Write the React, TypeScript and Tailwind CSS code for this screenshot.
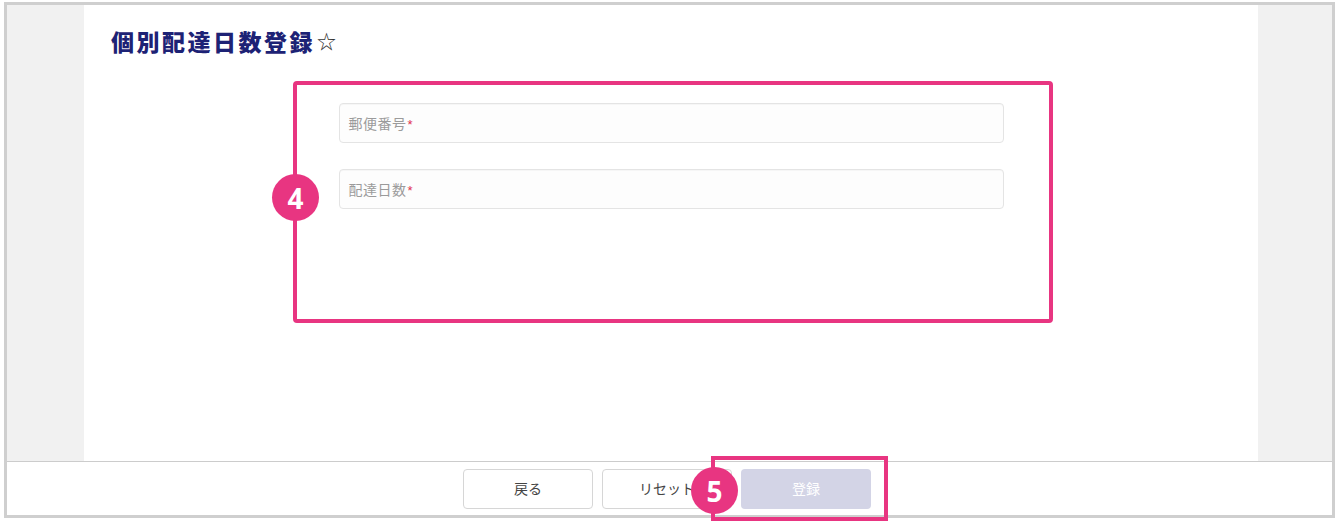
import React from "react";

const font = { fontFamily: '"Noto Sans CJK JP", "Noto Sans", sans-serif' };

function Field({ label }: { label: string }) {
  return (
    <div className="w-[665px] h-[40px] rounded-[4px] border border-[#e4e4e4] bg-[#fdfdfd] shadow-[inset_0_1px_1px_rgba(0,0,0,0.03)] flex items-center pl-[9px]">
      <span className="text-[14px] text-[#9b9b9b] tracking-[0.5px]">{label}</span>
      <span className="text-[13px] text-[#e0304e] ml-[1px] mt-[3px]" style={{ fontFamily: '"Liberation Sans", sans-serif' }}>*</span>
    </div>
  );
}

function Btn({ children, primary }: { children: React.ReactNode; primary?: boolean }) {
  return (
    <div
      className={
        primary
          ? "w-[130px] h-[40px] rounded-[4px] bg-[#d3d4e6] flex items-center justify-center text-[14px] text-white"
          : "w-[130px] h-[40px] rounded-[4px] border border-[#d6d6d6] bg-white flex items-center justify-center text-[14px] text-[#444]"
      }
    >
      {children}
    </div>
  );
}

function Badge({ n }: { n: string }) {
  return (
    <div className="w-[47px] h-[47px] rounded-full bg-[#e83581] flex items-center justify-center text-white text-[28px] font-bold leading-none" style={{ fontFamily: '"Open Sans", "Noto Sans", sans-serif' }}>
      {n}
    </div>
  );
}

export default function App() {
  return (
    <div className="relative w-[1338px] h-[527px] bg-white overflow-hidden" style={font}>
      <div className="absolute left-[4px] top-[2px] w-[1331px] h-[516px] border-[3px] border-[#cfcfcf] flex flex-col bg-white">
        <div className="flex flex-1 border-b border-[#cccccc]">
          <div className="w-[77px] bg-[#f1f1f1]" />
          <div className="w-[1174px] bg-white flex flex-col">
            <div className="pl-[27px] pt-[19px] flex items-center">
              <span className="text-[23px] font-black text-[#1d2275] tracking-[2.5px] leading-[34px]">個別配達日数登録</span>
              <span className="text-[19px] text-[#333] leading-[34px] ml-[2px]">☆</span>
            </div>
            <div className="flex flex-col items-center pt-[45px] gap-[26px]">
              <Field label="郵便番号" />
              <Field label="配達日数" />
            </div>
          </div>
          <div className="flex-1 bg-[#f1f1f1]" />
        </div>
        <div className="h-[53px] flex items-center justify-center gap-[9px] pr-[5px]">
          <Btn>戻る</Btn>
          <Btn>リセット</Btn>
          <Btn primary>登録</Btn>
        </div>
      </div>

      {/* annotations */}
      <div className="absolute left-[293px] top-[81px] w-[760px] h-[242px] border-[4px] border-[#e83581] rounded-[4px]" />
      <div className="absolute left-[272px] top-[174px]">
        <Badge n="4" />
      </div>
      <div className="absolute left-[711px] top-[456px] w-[177px] h-[65px] border-[4px] border-[#e83581]" />
      <div className="absolute left-[691px] top-[467px]">
        <Badge n="5" />
      </div>
    </div>
  );
}
